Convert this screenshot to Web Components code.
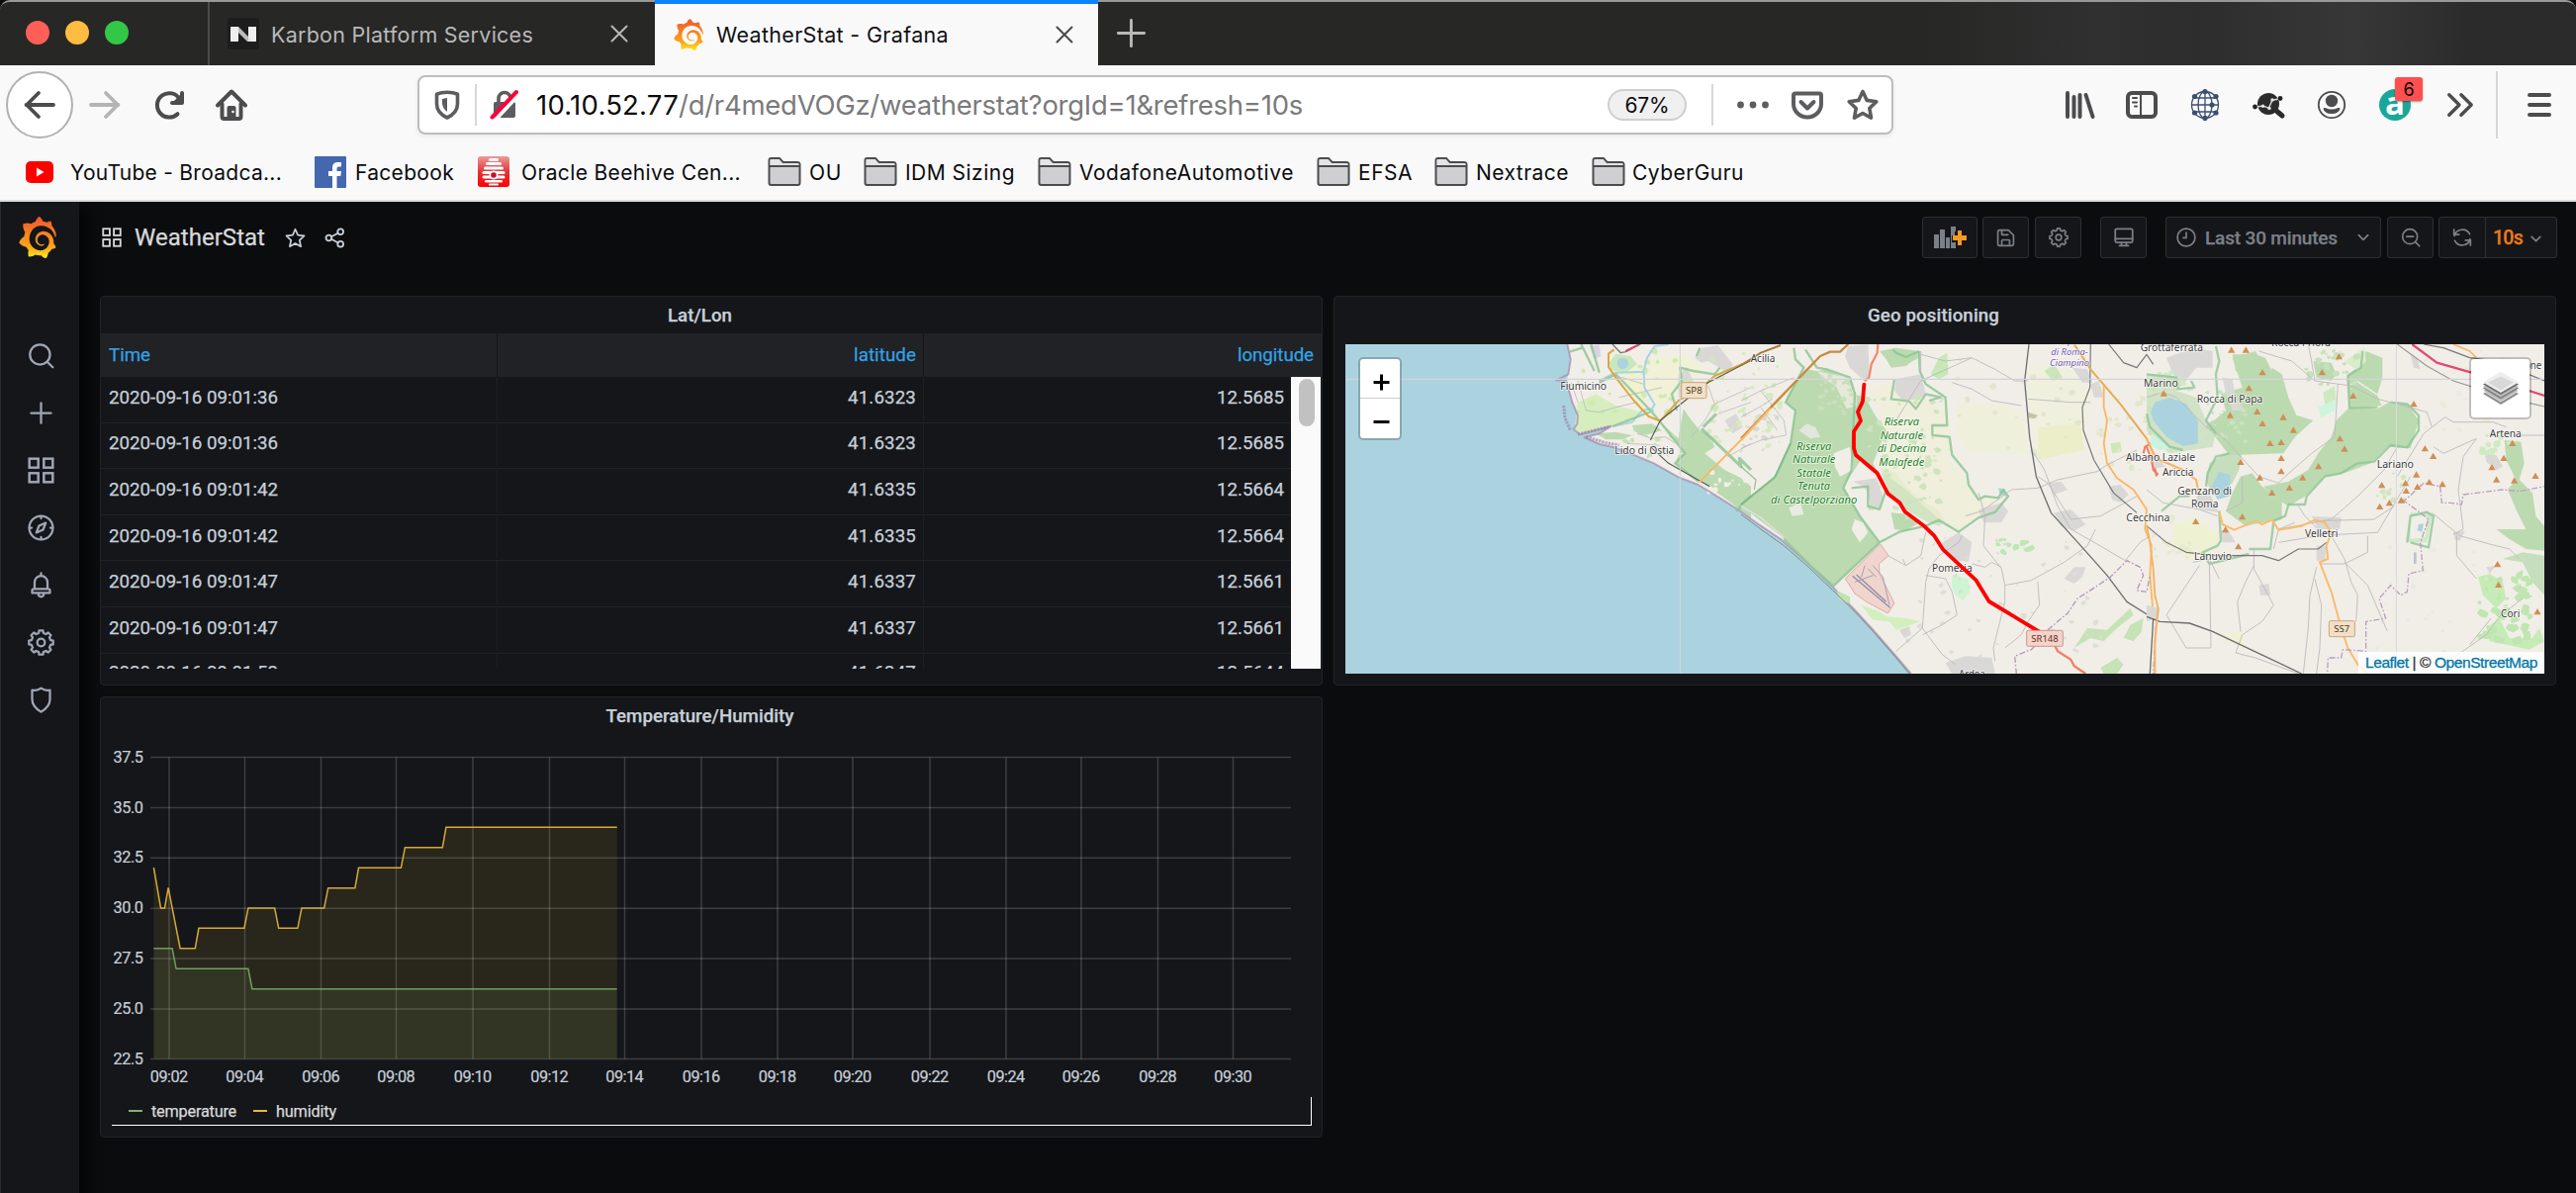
<!DOCTYPE html>
<html lang="en">
<head>
<meta charset="utf-8">
<title>WeatherStat - Grafana</title>
<style>
html,body{margin:0;padding:0;background:#0b0c0e;overflow:hidden}
body{width:2604px;height:1206px;display:flex;flex-direction:column;font-family:Inter,"Liberation Sans",sans-serif}
</style>
</head>
<body>
<browser-tabs></browser-tabs>
<browser-nav></browser-nav>
<bookmark-bar></bookmark-bar>
<grafana-app></grafana-app>

<script>
const define = (name, html, after) => customElements.define(name, class extends HTMLElement {
  connectedCallback() {
    if (this.shadowRoot) return;
    this.attachShadow({ mode: 'open' }).innerHTML = typeof html === 'function' ? html(this) : html;
    if (after) after(this);
  }
});

const GRAFANA = 'M342,161.2c-0.6-6.1-1.6-13.1-3.6-20.9c-2-7.7-5-16.2-9.4-25c-4.4-8.8-10.1-17.9-17.5-26.8c-2.9-3.5-6.1-6.9-9.5-10.2c5.1-20.3-6.2-37.9-6.2-37.9c-19.5-1.2-31.9,6.1-36.5,9.4c-0.8-0.3-1.5-0.7-2.3-1c-3.3-1.3-6.7-2.6-10.3-3.7c-3.5-1.1-7.1-2.1-10.8-3c-3.7-0.9-7.4-1.6-11.2-2.2c-0.7-0.1-1.3-0.2-2-0.3c-8.5-27.2-32.9-38.6-32.9-38.6c-27.3,17.3-32.4,41.5-32.4,41.5s-0.1,0.5-0.3,1.4c-1.5,0.4-3,0.9-4.5,1.3c-2.1,0.6-4.2,1.4-6.2,2.2c-2.1,0.8-4.1,1.6-6.2,2.5c-4.1,1.8-8.2,3.8-12.2,6c-3.9,2.2-7.7,4.6-11.4,7.1c-0.5-0.2-1-0.4-1-0.4c-37.8-14.4-71.3,2.9-71.3,2.9c-3.1,40.2,15.1,65.5,18.7,70.1c-0.9,2.5-1.7,5-2.5,7.5c-2.8,9.1-4.9,18.4-6.2,28.1c-0.2,1.4-0.4,2.8-0.5,4.2C18.8,192.7,8.5,228,8.5,228c29.1,33.5,63.1,35.6,63.1,35.6c0,0,0.1-0.1,0.1-0.1c4.3,7.7,9.3,15,14.9,21.9c2.4,2.9,4.8,5.6,7.4,8.3c-10.6,30.4,1.5,55.6,1.5,55.6c32.4,1.2,53.7-14.2,58.2-17.7c3.2,1.1,6.5,2.1,9.8,2.9c10,2.6,20.2,4.1,30.4,4.5c2.5,0.1,5.1,0.2,7.6,0.1l6.8,-0.1c15.3,21.8,42.1,24.9,42.1,24.9c19.1-20.1,20.2-40.1,20.2-44.4l0-1.8c4-2.8,7.8-5.8,11.4-9.1c7.6-6.9,14.3-14.8,19.9-23.3c0.5-0.8,1-1.6,1.5-2.4c21.6,1.2,36.9-13.4,36.9-13.4c-3.6-22.5-16.4-33.5-19.1-35.6l-1-0.8c0.1-1.4,0.2-2.7,0.3-4.1c0.2-2.4,0.2-4.9,0.2-7.3l-0.2-7.3c-0.4-6-1.2-10-2.3-15c-2.3-9.7-6.1-18.9-11-27.2c-5-8.3-11.2-15.6-18.3-21.8c-7-6.2-14.9-11.2-23.1-14.9c-8.3-3.7-16.9-6.1-25.5-7.2c-4.3-0.6-8.6-0.8-12.9-0.7c-4,0-8.5,0.3-13,1.1c-8.6,1.6-16.7,4.7-23.8,9c-7.1,4.3-13.3,9.6-18.3,15.6c-5,6-8.9,12.7-11.6,19.6c-2.7,6.9-4.2,14.1-4.6,21c-0.1,1.7-0.1,3.5-0.1,5.2l0.3,5.2c0.3,3.5,1,6.9,1.9,10.1c1.9,6.5,4.9,12.4,8.6,17.4c3.7,5,8.2,9.1,12.9,12.4c4.7,3.2,9.8,5.5,14.8,7c5,1.5,10,2.1,14.7,2.1c4,0,9-0.5,13.5-1.8c2-0.7,4-1.5,5.7-2.4c1.8-0.9,3.4-2,6.3-4c1.6-1.3,1.9-3.7,0.6-5.3c-1.1-1.4-3.1-1.8-4.7-0.9c-6,3-10,3.9-15.7,4.3c-3,0-6,-0.3-8-0.7c-3.7-0.5-7.4-1.6-10.9-3.2c-3.6-1.6-7-3.8-10.1-6.6c-3.1-2.8-5.8-6.1-7.9-9.9c-2.1-3.8-3.6-8-4.3-12.4c-0.3-2.2-0.5-4.5-0.4-6.7c0.1-2.5,0.4-5,0.7-7.1c1.7-9.6,6.5-19,13.9-26.1c1.9-1.8,3.9-3.4,6-4.9c2.1-1.5,4.4-2.8,6.8-3.9c2.4-1.1,4.8-2,7.4-2.7c2.5-0.7,5.1-1.1,7.8-1.4c3-0.2,6-0.2,8.2-0.1c2.9,0.2,5.7,0.6,8.5,1.3c5.6,1.2,11.1,3.3,16.2,6.1c10.2,5.7,18.9,14.5,24.2,25.1c2.7,5.3,4.6,11,5.5,16.9c0.5,4,0.8,8,0.7,12.5c-0.1,4-0.5,8-1.4,12.3c-0.8,4-2.5,10-4.1,14c-2.4,6-5.6,11.8-9.4,17.1c-7.7,10.6-18.2,19.2-30.2,24.7c-6,2.7-12.3,4.7-18.8,5.7c-5,0.9-10,1.1-15.6,1c-7-0.3-16-1.5-25-4c-6.7-1.9-13.2-4.6-19.4-7.8c-12.3-6.6-23.4-15.6-32-26.5c-4.3-5.4-8.1-11.3-11.2-17.4c-3.1-6.1-5.6-12.6-7.4-19.1c-1.8-6.6-2.9-13.3-3.4-20.1c-0.3-7,0-13,0.7-19.8c0.4-3.4,1-6.9,1.7-10.3c0.7-3.4,1.5-6.8,2.5-10.2c1.9-6.7,4.3-13.2,7.1-19.3c5.7-12.2,13.1-23.1,22-31.8c2.2-2.2,4.5-4.2,6.9-6.2c2.4-1.9,4.9-3.7,7.5-5.4c2.5-1.7,5.2-3.2,7.9-4.6c6-3,12-5.5,17-6.9c6-1.7,13-3.2,19.9-4.1c6-0.8,15-1.5,23-1.1c5.8,0.2,11.5,0.9,17,1.9c11.1,2.1,21.5,5.6,31,10.3c9.5,4.6,17.9,10.3,25.3,16.5c4,3.3,6.5,5.5,10.2,9.7c3.1,3.3,6,6.6,8.6,10c5.2,6.7,9.4,13.5,12.7,19.9c3,6,5.5,11.5,7.7,17.9c1.5,4.4,2.6,8.3,3.5,11.7c0.3,1.4,1.6,2.3,3,2.1c1.5-0.1,2.6-1.3,2.6-2.8C342.6,170.4,342.5,166.1,342,161.2z';

define('grafana-logo', `<style>:host{display:block;flex:none}svg{display:block;width:100%;height:100%}</style>
<svg viewBox="6 0 339 362" preserveAspectRatio="none"><defs><linearGradient id="g" x1="0" x2="0" y1="1" y2="0"><stop offset="0" stop-color="#fcee1f"/><stop offset=".25" stop-color="#fba919"/><stop offset=".95" stop-color="#f15b2a"/></linearGradient></defs><path fill="url(#g)" d="${GRAFANA}"/></svg>`);

/* Each icon: [viewBox size, markup]; strokes use currentColor. */
const cog = (teeth, ro, ri) => {
  let d = '';
  for (let i = 0; i < teeth; i++) {
    const a = i * 2 * Math.PI / teeth, s = Math.PI / teeth;
    [[a - s * .62, ri], [a - s * .4, ro], [a + s * .4, ro], [a + s * .62, ri]].forEach(([t, r]) =>
      d += (d ? 'L' : 'M') + (12 + r * Math.sin(t)).toFixed(2) + ' ' + (12 - r * Math.cos(t)).toFixed(2));
  }
  return d + 'Z';
};
const st = (w, m) => `<g fill="none" stroke="currentColor" stroke-width="${w}" stroke-linecap="round" stroke-linejoin="round">${m}</g>`;
const ICONS = {
  search: [24, st(2, '<circle cx="11" cy="11" r="9"/><path d="m17.5 17.5 5 5"/>')],
  plus: [24, st(2, '<path d="M12 3v18M3 12h18"/>')],
  grid: [24, st(2.2, '<rect x="1.5" y="1.5" width="8" height="8"/><rect x="14.5" y="1.5" width="8" height="8"/><rect x="1.5" y="14.5" width="8" height="8"/><rect x="14.5" y="14.5" width="8" height="8"/>').replace('stroke-linejoin="round"', '')],
  compass: [24, st(2, '<circle cx="12" cy="12" r="10.6"/><path d="M16.2 7.6 13.8 13.8 7.8 16.4 10.2 10.2ZM12 1.6v2M12 20.4v2M1.6 12h2M20.4 12h2"/>')],
  bell: [24, st(2, '<path d="M12 1.2v2M6.2 15.5V9.5a5.8 5.8 0 0 1 11.6 0v6M5.5 15.5h13q1.5 0 1.5 1.5v2H4v-2q0-1.5 1.5-1.5zM9.3 19.5q.5 3 2.7 3t2.7-3"/>')],
  gear: [24, st(2, `<path d="${cog(8, 11, 8.8)}"/><circle cx="12" cy="12" r="3.4"/>`)],
  shield: [24, st(2, '<path d="M12 1.5Q8.5 4.2 4 3.2V11.5Q4 18 12 22.8 20 18 20 11.5V3.2Q15.5 4.2 12 1.5z"/>')],
  star: [24, st(2, '<path d="m12 2 3 6.8 7.3.8-5.4 5 1.5 7.3L12 18.2 5.6 21.9l1.5-7.3-5.4-5L9 8.8z"/>')],
  share: [24, st(2.1, '<circle cx="5" cy="12" r="3.3"/><circle cx="18.5" cy="4.8" r="3.3"/><circle cx="18.5" cy="19.2" r="3.3"/><path d="m8 10.5 7.5-4M8 13.5l7.5 4"/>')],
  save: [24, st(2.1, '<path d="M4 2h11.5L22 8.5V20q0 2-2 2H4q-2 0-2-2V4q0-2 2-2zM7 2.5V8h8M7 21.5V15.5q0-1 1-1h8q1 0 1 1v6"/>')],
  monitor: [24, st(2.1, '<rect x="1.5" y="1.5" width="21" height="16.5" rx="2"/><path d="M1.5 13.5h21M9 18v3.5M15 18v3.5M6.5 22h11"/>')],
  clock: [24, st(2, '<circle cx="12" cy="12" r="10.7"/><path d="M12 6v6.5H8.5"/>')],
  down: [24, st(3, '<path d="m4 8 8 8 8-8"/>')],
  zoomout: [24, st(2, '<circle cx="11" cy="11" r="9"/><path d="m17.5 17.5 5 5M7 11h8"/>')],
  sync: [24, st(2.1, '<path d="M2.5 10a10 10 0 0 1 18.5-2M2 2.5V8.5h6M21.5 14a10 10 0 0 1-18.5 2M22 21.5V15.5h-6"/>')],
  addpanel: [32, '<g transform="translate(0 3)"><path fill="currentColor" d="M0 10h5v14H0zM6 5h5v19H6zM12 13h4v11h-4zM17 2h5v5h-1v4h-3v7h4v6h-5z"/><path d="M24 6h4v5h5v5h-5v5h-4v-5h-5v-5h5z" fill="#f59a23"/></g>'],
  close: [24, st(2.4, '<path d="m3 3 18 18M21 3 3 21"/>')],
  back: [32, st(3.8, '<path d="M30 16H2.5M15 4 3 16l12 12"/>')],
  fwd: [32, st(3.8, '<path d="M2 16h27.5M17 4l12 12-12 12"/>')],
  reload: [32, st(4, '<path d="M24.5 25.2A12.2 12.2 0 1 1 26.5 10"/><path d="M29 4v10H19"/>') + '<path d="M19 14 29 4v10z" fill="currentColor"/>'],
  home: [32, st(4, '<path d="M2 16.5 16 2.5l14 14"/><path d="M6.5 15V28q0 2 2 2h15q2 0 2-2V15"/>') + '<path d="M11.5 30V19q0-2 2-2h5q2 0 2 2v11z" fill="currentColor"/><circle cx="17.5" cy="23" r="1.3" fill="#f9f9fa"/>'],
  track: [32, st(3.6, '<path d="M16 3.2q6 0 10.5 2V15q0 9-10.5 14Q5.5 24 5.5 15V5.2Q10 3.2 16 3.2z"/>') + '<path d="M16 9v14q-5-4-5-9V10z" fill="currentColor"/>'],
  lock: [32, '<path d="M5 15q0-2 2-2h18q2 0 2 2v12q0 2-2 2H7q-2 0-2-2z" fill="currentColor"/>' + st(3.6, '<path d="M10 14V9.5a6 6 0 0 1 12 0V14"/>') + '<path d="m6 32 24-26" stroke="#fff" stroke-width="4"/><path d="M3.5 28.5 28 3" stroke="#ff0039" stroke-width="4" stroke-linecap="round"/>'],
  dots: [32, '<g fill="currentColor"><circle cx="3.5" cy="16" r="3.4"/><circle cx="16" cy="16" r="3.4"/><circle cx="28.5" cy="16" r="3.4"/></g>'],
  pocket: [32, st(4, '<path d="M4 4.5h24q2 0 2 2V15a14 13.5 0 0 1-28 0V6.5q0-2 2-2z"/><path d="m9.5 13 6.5 6.5 6.5-6.5"/>')],
  bstar: [32, st(3.6, '<path d="m16 2.5 4.2 8.9 9.6 1.3-7 6.8 1.7 9.6L16 24.5l-8.5 4.6 1.7-9.6-7-6.8 9.6-1.3z"/>')],
  library: [32, st(4, '<path d="M4 4v24M10.5 8v20M16.5 6v22M22.5 6l7 22"/>')],
  sidebar: [32, st(4, '<rect x="2" y="4" width="28" height="24" rx="4"/>') + st(2, '<path d="M15 4v24M7 9h4M7 13.5h4M9 17.5h2"/>')],
  globe: [32, `<g fill="none" stroke="#3b4f70" stroke-width="1.3"><circle cx="16" cy="16" r="13.5"/><ellipse cx="16" cy="16" rx="7" ry="13.5"/><path d="M16 2v28M2.5 16h27M5 9h22M5 23h22"/></g><g fill="#3b4f70"><circle cx="16" cy="2.6" r="2.6"/><circle cx="16" cy="29.4" r="2.6"/><circle cx="5.5" cy="7.5" r="2.6"/><circle cx="27" cy="7.5" r="2.6"/><circle cx="5.5" cy="24" r="2.6"/><circle cx="27" cy="24" r="2.6"/><circle cx="23" cy="16" r="2.6"/></g>`],
  magnet: [32, `<circle cx="16" cy="15" r="11" fill="#2c2c2c"/><path d="m23 21 7 6" stroke="#2c2c2c" stroke-width="5" stroke-linecap="round"/><path d="m2 18 8.5-.8 6 2 3.5-8 8-1.5" stroke="#d8d8d8" stroke-width="1.4" fill="none"/><circle cx="2.5" cy="18" r="2.4" fill="#222"/><circle cx="28" cy="9.5" r="2.4" fill="#222"/><g fill="#e4e4e4"><circle cx="10.5" cy="17.2" r="1.7"/><circle cx="17" cy="19.5" r="1.7"/><circle cx="20" cy="11" r="1.7"/></g>`],
  account: [32, st(1.8, '<circle cx="16" cy="16" r="13.2"/>') + '<g fill="currentColor"><circle cx="16" cy="12" r="6.2"/><path d="M7.5 20q0-1.5 2-1 6.5 3 13 0 2-.5 2 1-1.5 5-8.5 5t-8.5-5z"/></g>'],
  more: [32, st(3.6, '<path d="m5 5 11 11L5 27M18 5l11 11-11 11"/>')],
  menu: [32, st(4, '<path d="M6 6h20M6 16h20M6 26h20"/>')],
  nutanix: [32, '<rect width="32" height="32" rx="3" fill="#1d1d1d"/><path d="M3 9h8v15H3zM21 9h8v15h-8z" fill="#eee"/><path d="M11 9 24 22v2h-4L11 15z" fill="#bdbdbd"/><path d="M21 9h8v15h-8z" fill="#eee" opacity=".8"/>'],
  youtube: [32, '<rect x="2" y="5" width="28" height="22" rx="5" fill="#f00"/><path d="m13 11.5 7.5 4.5-7.5 4.5z" fill="#fff"/>'],
  facebook: [32, '<rect width="32" height="32" rx="1" fill="#4467b0"/><path d="M18 32V20h-4v-5h4v-3.5Q18 6 23.5 6H27v4.5h-2.5q-2 0-2 2V15H27l-.7 5h-3.8v12z" fill="#fff"/>'],
  oracle: [32, '<defs><linearGradient id="o" x2="0" y2="1"><stop offset="0" stop-color="#ee9a97"/><stop offset=".5" stop-color="#e2353a"/><stop offset="1" stop-color="#f00"/></linearGradient></defs><rect width="32" height="31" rx="3" fill="url(#o)"/><g fill="#fff"><rect x="11" y="2" width="10" height="3" rx="1.5"/><rect x="8" y="6" width="16" height="3" rx="1.5"/><rect x="6" y="10.5" width="20" height="3" rx="1.5"/><rect x="4.5" y="15" width="23" height="3" rx="1.5"/><rect x="4.5" y="19.5" width="23" height="3" rx="1.5"/><rect x="7" y="24" width="18" height="2.6" rx="1.3"/><rect x="11" y="27.5" width="10" height="2" rx="1"/></g><circle cx="16" cy="19" r="4.5" fill="#fff"/><circle cx="16" cy="19" r="2.8" fill="#c8102e"/>'],
  folder: [34, '<path d="M1.5 8V5q0-2 2-2H12l3.5 4H30q2.5 0 2.5 2.5V28q0 2-2 2h-27q-2 0-2-2z" fill="#cfcfd1" stroke="#4c4c4e" stroke-width="2"/><path d="M2.5 10.5h29V9q0-1-1-1H15l-3.500-4h-8q-1 0-1 1z" fill="#e4e4e6"/><path d="M2 11h30" stroke="#4c4c4e" stroke-width="2"/>'],
};
define('ui-icon', el => {
  const [v, m] = ICONS[el.getAttribute('name')], s = el.getAttribute('size') || v;
  return `<style>:host{display:block;flex:none;width:${s}px;height:${s}px}svg{display:block;overflow:visible}</style><svg width="${s}" height="${s}" viewBox="0 0 ${v} ${v}">${m}</svg>`;
});

/* ---------- browser chrome ---------- */
define('browser-tabs', `<style>
:host{display:flex;height:66px;flex:none;box-sizing:border-box;align-items:center;border-top:2px solid #999;color:#b9b9b9;font-size:21.5px;border-top-left-radius:10px;border-top-right-radius:10px;
background:linear-gradient(90deg,#272726 0,#272726 1950px,#303030 2120px,#2d2d2d 2220px,#373737 2380px,#2b2b2b 2500px)}
.lights{width:184px;padding-left:26px;height:100%;display:flex;gap:16px;align-items:center;border-right:2px solid #4b4b4a;box-sizing:content-box}
.lights i{width:24px;height:24px;border-radius:50%;flex:none;margin-top:-2px}
.tab{display:flex;align-items:center;height:100%;box-sizing:border-box;flex:none}
.tab.a{background:#f9f9fa;color:#101012;border-top:4px solid #0a84ff;height:66px;margin-top:-2px;width:448px;padding-left:19px}
.tab.b{width:450px;padding-left:18px}
fit-text{margin:2px 0 0 12px}
.a fit-text{margin-top:-1px}
</style>
<div class="lights"><i style="background:#ff5f57"></i><i style="background:#febc40"></i><i style="background:#33c748"></i></div>
<div class="tab b"><ui-icon name="nutanix"></ui-icon><fit-text w="265">Karbon Platform Services</fit-text><ui-icon name="close" size="20" style="margin-left:77px"></ui-icon></div>
<div class="tab a"><grafana-logo style="width:30px;height:32px"></grafana-logo><fit-text w="235" style="margin-left:13px">WeatherStat - Grafana</fit-text><ui-icon name="close" size="20" style="margin-left:107px;color:#4a4a4c"></ui-icon></div>
<ui-icon name="plus" size="35" style="margin:-2px 0 0 16px"></ui-icon>`);

define('browser-nav', `<style>
:host{display:flex;height:80px;flex:none;align-items:center;background:#f9f9fa;color:#4c4c4e;padding-left:6px}
.back{width:64px;height:64px;border:2px solid #b1b1b1;border-radius:50%;background:#fff;display:flex;align-items:center;justify-content:center;flex:none}
.url{margin-left:172px;box-sizing:border-box;width:1492px;height:60px;border:2px solid #bdbdbd;border-radius:8px;background:#fff;display:flex;align-items:center;box-shadow:0 2px 5px #0001;color:#5d5d5f;font-size:27.5px;flex:none}
.sep{width:2px;height:42px;background:#d7d7db;flex:none}
.pill{width:76px;height:28px;border:2px solid #cfcfd1;border-radius:16px;background:#f0f0f1;color:#0c0c0d;font-size:21px;display:flex;align-items:center;justify-content:center;margin-left:308px}
.badge{position:absolute;left:16px;top:-12px;width:28px;height:24px;border-radius:3px;background:#ff4f4f;color:#000;font-size:18px;line-height:25px;text-align:center;box-shadow:0 1px 2px #0006}
.a{position:relative;width:32px;height:32px;border-radius:50%;background:#1aa79a;text-align:center;flex:none}
.a b{color:#fff;font:bold 33px/27px "Open Sans",sans-serif}
</style>
<div class="back"><ui-icon name="back"></ui-icon></div>
<ui-icon name="fwd" style="margin-left:16px;color:#b4b4b6"></ui-icon>
<ui-icon name="reload" style="margin-left:33px"></ui-icon>
<ui-icon name="home" style="margin-left:31px"></ui-icon>
<div class="url"><ui-icon name="track" style="margin-left:12px"></ui-icon><div class="sep" style="margin:0 12px 0 12px"></div><ui-icon name="lock"></ui-icon>
<fit-text w="144" style="margin-left:16px;color:#0c0c0d">10.10.52.77</fit-text><fit-text w="631" style="color:#7a7a7c">/d/r4medVOGz/weatherstat?orgId=1&amp;refresh=10s</fit-text>
<div class="pill"><fit-text w="45">67%</fit-text></div><div class="sep" style="margin-left:25px"></div>
<ui-icon name="dots" style="margin-left:24px"></ui-icon><ui-icon name="pocket" style="margin-left:23px"></ui-icon><ui-icon name="bstar" style="margin-left:24px"></ui-icon></div>
<ui-icon name="library" style="margin-left:172px"></ui-icon>
<ui-icon name="sidebar" style="margin-left:31px"></ui-icon>
<ui-icon name="globe" style="margin-left:32px"></ui-icon>
<ui-icon name="magnet" style="margin-left:32px"></ui-icon>
<ui-icon name="account" style="margin-left:32px"></ui-icon>
<div class="a" style="margin-left:32px"><b>a</b><div class="badge">6</div></div>
<ui-icon name="more" size="30" style="margin-left:34px"></ui-icon>
<div class="sep" style="margin-left:22px;height:68px"></div>
<ui-icon name="menu" style="margin-left:26px"></ui-icon>`);

define('book-mark', el => `<style>:host{display:flex;align-items:center;flex:none;gap:${el.getAttribute('gap') || 8}px;margin-left:${el.getAttribute('ml') || 24}px}</style>
<ui-icon name="${el.getAttribute('icon') || 'folder'}"></ui-icon><fit-text w="${el.getAttribute('w')}">${el.textContent}</fit-text>`);
define('bookmark-bar', `<style>:host{display:flex;height:58px;flex:none;align-items:center;box-sizing:border-box;background:#f9f9fa;border-bottom:2px solid #dcdcdd;color:#0c0c0d;font-size:21px}</style>
<book-mark icon="youtube" w="214" gap="15" ml="24">YouTube - Broadca...</book-mark>
<book-mark icon="facebook" w="100" gap="9" ml="33">Facebook</book-mark>
<book-mark icon="oracle" w="222" gap="12" ml="24">Oracle Beehive Cen...</book-mark>
<book-mark w="33" ml="27">OU</book-mark>
<book-mark w="111" ml="22">IDM Sizing</book-mark>
<book-mark w="217" ml="23">VodafoneAutomotive</book-mark>
<book-mark w="55" ml="23">EFSA</book-mark>
<book-mark w="94" ml="22">Nextrace</book-mark>
<book-mark w="113" ml="23" gap="7">CyberGuru</book-mark>`);

/* ---------- dashboard ---------- */
define('side-menu', `<style>:host{display:flex;flex-direction:column;align-items:center;width:79px;border-left:1px solid #2a2b2f;background:#15161a;color:#9fa7b3;padding-top:15px;flex:none;z-index:1;box-shadow:8px 8px 12px #000a}
nav{display:flex;flex-direction:column;gap:31px;margin-top:85px;padding-left:1px}</style>
<grafana-logo style="width:38px;height:42px;margin-right:6px"></grafana-logo>
<nav>${['search', 'plus', 'grid', 'compass', 'bell', 'gear', 'shield'].map(n => `<ui-icon name="${n}" size="27"></ui-icon>`).join('')}</nav>`);

define('tool-button', el => `<style>:host{display:flex;box-sizing:border-box;height:42px;align-items:center;justify-content:center;border:1px solid #2c2f33;border-radius:3px;background:#15161a;color:#7b8087;flex:none}</style><slot></slot>`);

define('dash-toolbar', `<style>:host{display:flex;height:42px;padding:15px 19px 38px 23px;align-items:center;color:#d8d9da;font-size:24px}
.t{flex:1;display:flex;align-items:center}</style>
<div class="t"><ui-icon name="grid" size="20"></ui-icon><fit-text w="132" style="margin-left:13px">WeatherStat</fit-text>
<ui-icon name="star" size="21" style="margin-left:20px;color:#c7d0d9"></ui-icon><ui-icon name="share" size="21" style="margin-left:19px;color:#c7d0d9"></ui-icon></div>
<tool-button style="width:56px"><ui-icon name="addpanel" size="32"></ui-icon></tool-button>
<tool-button style="width:47px;margin-left:5px"><ui-icon name="save" size="19"></ui-icon></tool-button>
<tool-button style="width:47px;margin-left:6px"><ui-icon name="gear" size="20"></ui-icon></tool-button>
<tool-button style="width:47px;margin-left:19px"><ui-icon name="monitor" size="20"></ui-icon></tool-button>
<tool-button style="width:218px;margin-left:19px;font-size:19px;font-weight:500"><ui-icon name="clock" size="20"></ui-icon><fit-text w="134" style="margin:0 19px 0 9px">Last 30 minutes</fit-text><ui-icon name="down" size="14"></ui-icon></tool-button>
<tool-button style="width:47px;margin-left:6px"><ui-icon name="zoomout" size="20"></ui-icon></tool-button>
<tool-button style="width:48px;margin-left:5px;border-radius:3px 0 0 3px"><ui-icon name="sync" size="20"></ui-icon></tool-button>
<tool-button style="width:73px;margin-left:-1px;border-radius:0 3px 3px 0;font-size:19.5px;font-weight:500;color:#eb7b18"><fit-text w="30" style="margin-right:7px">10s</fit-text><ui-icon name="down" size="13" style="color:#7b8087;margin:3px 7px 0 0"></ui-icon></tool-button>`);

define('dash-panel', el => `<style>:host{display:flex;flex-direction:column;box-sizing:border-box;border:1px solid #212327;border-radius:4px;background:#15161a;min-width:0;min-height:0}
h2{margin:0;height:37px;padding-right:23px;display:flex;align-items:center;justify-content:center;font-size:18.7px;font-weight:500;color:#c7d0d9;flex:none}</style>
<h2><fit-text w="${el.getAttribute('tw')}">${el.getAttribute('heading')}</fit-text></h2><slot></slot>`);

const ROWS = [['36', '41.6323', '12.5685'], ['36', '41.6323', '12.5685'], ['42', '41.6335', '12.5664'], ['42', '41.6335', '12.5664'], ['47', '41.6337', '12.5661'], ['47', '41.6337', '12.5661'], ['53', '41.6347', '12.5644']];
define('data-table', `<style>:host{display:flex;flex-direction:column;font-size:18.7px;color:#c7d0d9}
.h,.r{display:flex}.h{background:#202226;color:#33a2e5;height:44px}
.h>*,.r>*{display:flex;align-items:center;box-sizing:border-box;padding:0 7px 0 8px;border-right:1px solid #1d1f23}
.h>*{border-color:#15161a}
.h>*:nth-child(1),.r>*:nth-child(1){width:401px}.h>*:nth-child(2),.r>*:nth-child(2){width:431px;justify-content:flex-end}
.h>*:nth-child(3),.r>*:nth-child(3){flex:1;justify-content:flex-end;border:0}.h>*:nth-child(3){padding-right:8px}
.body{display:flex;height:295px;overflow:hidden}.rows{flex:1}.r{height:45.6px;border-bottom:1px solid #202226}.r>*{margin-bottom:2px;padding-bottom:2px}
.r:last-child>*{padding-bottom:4px}
.bar{width:30px;background:#fafafa;margin-right:1px;display:flex;justify-content:center;padding-top:2px;box-sizing:border-box}.bar i{width:16px;height:48px;border-radius:8px;background:#c1c1c1;margin-left:1px}</style>
<div class="h"><div><fit-text w="42">Time</fit-text></div><div><fit-text w="63">latitude</fit-text></div><div><fit-text w="77">longitude</fit-text></div></div>
<div class="body"><div class="rows">${ROWS.map(([s, a, b]) => `<div class="r"><div><fit-text w="171">2020-09-16 09:01:${s}</fit-text></div><div><fit-text w="69">${a}</fit-text></div><div><fit-text w="68">${b}</fit-text></div></div>`).join('')}</div><div class="bar"><i></i></div></div>`);

/* ---------- chart: origin of the drawing is the panel body (102,742) ---------- */
const X0 = 102, Y0 = 742;
const px = x => (x * 0.44643 - X0).toFixed(1), py = y => (680 + y / 3 - Y0).toFixed(1);
const HUM = [[348,591],[364,714],[373,714],[381,652],[408,836],[442,836],[450,775],[553,775],[562,714],[622,714],[631,775],[674,775],[683,714],[734,714],[743,653],[804,653],[812,592],[908,592],[917,530],[1002,530],[1010,469],[1397,469]];
const TMP = [[348,836],[390,836],[399,898],[562,898],[571,959],[1397,959]];
const line = a => a.map(([x, y]) => px(x) + ',' + py(y)).join(' ');
const area = a => line([...a, [1397, 1171], [348, 1171]]);
const VX = [171, 247.5, 324.5, 400.5, 478, 555.5, 631.5, 709, 786, 862, 940, 1017, 1093, 1170.5, 1246.5];
const HY = [765.5, 816.5, 867.3, 918.2, 969, 1020, 1070.5];
define('time-chart', () => `<style>:host{display:flex;flex-direction:column;color:#c7d0d9;flex:1}svg{display:block;flex:none;font:16.3px Roboto,sans-serif}
.lg{display:flex;align-items:center;height:28px;width:1212px;margin-left:11px;border-right:1px solid #fff;border-bottom:1px solid #fff;font-size:16.3px;color:#d8d9da;padding-left:0}
.lg i{width:14px;height:2px;flex:none}</style>
<svg width="1234" height="367" viewBox="0 0 1234 367">
<g stroke="#ffffff" stroke-opacity=".17" stroke-width="1.5">${HY.map(y => `<path d="M${152 - X0} ${y - Y0}H${1305 - X0}"/>`).join('')}${VX.map(x => `<path d="M${x - X0} ${765.5 - Y0}V${1070.5 - Y0}"/>`).join('')}</g>
<polygon points="${area(TMP)}" fill="#7eb26d" fill-opacity=".1"/><polygon points="${area(HUM)}" fill="#e2c234" fill-opacity=".1"/>
<polyline points="${line(TMP)}" fill="none" stroke="#7eb26d" stroke-opacity=".85" stroke-width="1.5"/><polyline points="${line(HUM)}" fill="none" stroke="#eab839" stroke-opacity=".9" stroke-width="1.5"/>
<g fill="#c7d0d9" stroke="#c7d0d9" stroke-width=".2">${HY.map((y, i) => `<text x="${145 - X0}" y="${y - Y0 + 5}" text-anchor="end" textLength="30.5">${(37.5 - 2.5 * i).toFixed(1)}</text>`).join('')}
${VX.map((x, i) => `<text x="${x - X0}" y="${1094 - Y0}" text-anchor="middle" textLength="38.5">09:${String(2 + 2 * i).padStart(2, '0')}</text>`).join('')}</g></svg>
<div class="lg"><i style="background:#7eb26d;margin-left:17px"></i><fit-text w="86" style="margin:0 17px 0 9px">temperature</fit-text><i style="background:#eab839"></i><fit-text w="61" style="margin-left:9px">humidity</fit-text></div>`);

/* ---------- map: drawn at three units per pixel ---------- */
let seed = 7;
const rnd = () => (seed = (seed * 16807) % 2147483647) / 2147483647;
const blobs = (n, x, y, w, h, s, c) => Array.from({ length: n }, () => {
  const cx = x + rnd() * w, cy = y + rnd() * h, r = s * (.4 + rnd()), k = 6;
  return `<polygon fill="${c}" points="${Array.from({ length: k }, (_, i) => { const a = i / k * 6.283, q = r * (.5 + rnd() * .7); return (cx + q * Math.cos(a) * 1.2).toFixed(0) + ',' + (cy + q * Math.sin(a)).toFixed(0); }).join(' ')}"/>`;
}).join('');
const P = (pts, fill, extra = '') => `<polygon points="${pts}" fill="${fill}" ${extra}/>`;
const L = (d, c, w, extra = '') => `<path d="M${d}" fill="none" stroke="${c}" stroke-width="${w}" stroke-linejoin="round" ${extra}/>`;
const G = '#bcdab0', U = '#d9d8d6', R = '#bdbbbd', W = '#aad3df', B = '#8fc596', O = '#fbb762', K = '#777';
const T = (x, y, t, w, c = '#3b3b3b', s = 30, e = '') => `<text x="${x}" y="${y}" font-size="${s}" fill="${c}" text-anchor="middle" ${w ? `textLength="${w}" lengthAdjust="spacingAndGlyphs"` : ''} ${e}>${t}</text>`;
const peak = s => s.split(' ').map(p => { const [x, y] = p.split(',').map(Number); return `<path d="M${x} ${y - 10}l11 19h-22z" fill="#d08f55"/>`; }).join('');
const IT = 'font-style="italic"';
const COAST = '703,39 713,85 706,130 700,152 718,215 735,255 733,280 722,297 742,313 790,300 835,288 800,310 760,322 800,340 845,350 910,377 965,400 1040,442 1100,465 1165,505 1220,540 1290,590 1350,630 1435,705 1508,775 1575,845 1630,905 1700,985 1745,1038';

define('geo-map', () => `<style>:host{display:block;position:relative;margin:11px;width:1212px;height:333px;overflow:hidden;-webkit-text-stroke:0}svg{display:block}
.zoom,.layers{position:absolute;background:#fff;border:2px solid #0003;background-clip:padding-box;border-radius:5px;box-sizing:border-box}
.zoom{left:13px;top:13px;width:44px;height:84px}.zoom div{height:39px;position:relative}.zoom div+div{border-top:1px solid #ccc}
.zoom svg{margin:auto;padding-top:14px;padding-left:2px}
.layers{right:13px;top:13px;width:63px;height:63px;border-width:2px}.layers svg{margin:12px 0 0 12px}
.attr{position:absolute;right:0;bottom:0;height:22px;width:188px;background:#fffc;display:flex;align-items:center;justify-content:center;color:#333;font-family:"Liberation Sans",sans-serif;font-size:15.5px;-webkit-text-stroke:.3px}
.attr a{color:#0078a8}</style>
<svg width="1212" height="333" viewBox="0 0 3636 999" font-family="'Noto Sans',sans-serif">
<rect width="3636" height="999" fill="${W}"/>
<g transform="translate(-30 -39)">
${P(COAST + ' 3700,1038 3700,39', '#f1eee8')}
${P('735,215 790,190 850,225 930,245 900,275 850,285 790,298 742,310 725,295', '#d6eebd')}
${P('865,120 905,95 935,160 935,235 890,180', '#eef2cf')}${P('960,80 1060,70 1120,110 1030,200 975,230 940,150', '#f0f1d6')}
${P('830,95 850,68 895,75 915,100 880,125 835,118', '#c9e6bd')}<circle cx="871" cy="97" r="17" fill="${W}"/>
${P('900,285 960,280 990,300 960,310 930,315 905,302', G)}${P('790,310 850,305 900,315 870,328 820,328', G)}
${P('985,275 1040,325 1055,235 1080,270 1105,300 1130,310 1150,350 1120,370 1180,420 1230,445 1260,470 1260,570 1200,520 1130,470 1030,400 1040,375 1060,370', G)}
${P('1090,80 1110,50 1160,42 1205,100 1190,130 1165,110 1130,90 1110,95', U)}${P('1040,130 1065,108 1085,150 1080,200 1040,200', U)}
${P('1180,270 1215,250 1235,290 1205,310', U)}${P('770,45 800,40 805,75 785,85', '#d8d3e4')}
${blobs(28, 740, 60, 460, 200, 9, '#cdebb0')}${blobs(20, 860, 310, 200, 80, 6, '#c4e4b4')}${blobs(16, 1110, 150, 140, 200, 7, '#d9e8c0')}${blobs(20, 1130, 330, 120, 160, 8, '#f1eee8')}
${L('703,39 713,85 706,130 670,148 700,150 718,215 735,255 733,280 722,297 742,313 790,300 835,288 800,310 755,322 800,342 845,352 910,377 965,400 1040,442 1100,465 1165,505 1220,540 1290,590 1350,630 1435,705 1508,775 1575,845 1630,905 1700,985 1745,1038', '#a68db4', 6, 'opacity=".75"')}
${L('692,225 696,262 712,300M760,320 820,338 860,345M735,312 835,288', '#9b86ab', 9, 'opacity=".7" stroke-dasharray="7 3"')}
${L('1010,39 968,45 945,80 935,120 937,170 968,222 960,235 930,240 900,275 840,288M935,122 850,125 800,150', W, 6)}
${L('745,39 785,120M775,39 800,125M710,62 748,50M800,155 850,130 870,150 960,245 985,275 1060,370 1030,400 1100,455M840,288 965,240M1095,75 1105,50M1165,110 1150,130 1085,120 1045,110 1050,150 1020,190 1035,240', B, 7, 'opacity=".85"')}
${L('1115,290 1155,250M1110,295 1230,410 1225,385 1260,420M1215,545 1260,500', B, 9, 'opacity=".85"')}
${L('735,150 760,240 800,245 850,230 915,215M715,155 735,215M800,150 870,140 935,160M860,200 990,170M915,310 960,325 1000,320 1050,350M885,340 980,345 1010,380M1080,320 1120,270 1150,220 1260,170M1160,250 1260,215M1130,165 1150,220M1190,380 1260,340', R, 2.5)}
${L('845,55 828,68 828,108 850,140 905,210 950,258 985,272 1040,210 1110,170 1150,135 1220,105 1260,88', '#dba73d', 6)}
${L('1260,88 1130,155 1060,210 985,270 955,330M955,350 1010,400 1135,470', '#555b55', 3.5)}
${L('1103,458 1195,365 1260,298', O, 6)}${L('840,39 865,65 880,62 925,39', K, 4)}${L('880,60 920,40', '#e0466e', 6)}
</g>
<g transform="translate(1200 -39)">
${P('140,195 195,115 230,120 260,115 330,150 345,190 372,200 370,380 330,440 310,475 360,560 420,640 280,770 200,700 120,620 0,530 100,445 150,340 165,240 135,215', G)}
${P('230,120 320,140 350,190 350,225 320,235 290,170 250,140', '#e6e8d8')}
${P('280,370 330,350 340,420 300,440 285,410', '#f1eee8')}${P('200,280 225,290 240,320 210,325 175,300', '#e3e6dc')}${P('345,570 370,580 385,610 360,640 335,600', '#f1eee8')}${P('145,535 180,520 190,555 155,560', '#e8ebe0')}
${P('370,190 410,260 440,300 400,400 415,430 375,395 345,370 342,300', G)}
${P('420,410 470,430 500,470 560,520 600,545 620,575 600,590 560,575 500,540 450,490', '#d2e4c2')}${P('455,550 510,555 540,580 500,605 465,600', G)}
${P('420,60 470,50 540,60 540,80 520,90 500,105 455,110 440,85', G)}${P('600,80 625,65 628,130 600,145 575,130', '#c5e8b5')}
${P('395,180 430,160 480,165 620,240 640,330 630,390 690,450 720,500 790,510 720,565 660,605 600,570 500,480 420,420 440,300', '#eef0d6', 'opacity=".7"')}
${P('655,215 780,220 850,240 870,330 870,375 760,370 690,370 650,300', '#eff0dc')}${P('870,100 1000,110 1060,200 1040,330 900,390 880,250 865,190', '#eff1da', 'opacity=".7"')}${P('900,290 1030,280 1040,360 900,390', '#eceec9')}
${P('325,45 385,40 390,140 375,150 330,110 315,75', U)}${P('470,145 545,130 560,190 540,205 490,210 465,180', U)}${P('340,455 410,445 430,500 420,535 395,540 385,490 370,470', U)}
${P('720,540 790,520 810,545 790,580 735,580', U)}${P('610,640 660,610 700,640 690,700 660,695 615,670', U)}${P('1115,470 1150,465 1175,495 1150,520 1125,510', U)}${P('950,550 1000,540 1045,585 1010,605 970,590', U)}${P('1005,110 1050,115 1065,155 1035,155', U)}${P('1060,160 1085,150 1100,200 1070,200', U)}
${P('620,1005 680,985 760,990 770,1038 640,1038', U)}${P('480,905 510,895 515,920 495,930', U)}${P('1010,715 1045,715 1035,745 1010,765 980,750', U)}${P('935,460 970,455 990,480 950,495', U)}
${P('640,740 690,750 693,790 675,818 650,800 638,770', '#cef5d2')}
${P('316,750 422,645 447,680 418,705 420,735 465,825 445,855 380,820 345,795', '#efd5cd', 'stroke="#e3a9a0" stroke-width="3"')}
${L('338,742 452,838M350,738 440,820', '#8f8ea6', 4)}${L('375,710 365,745M385,720 410,745M400,710 430,745 450,830M345,760 400,740', '#a3a0b4', 3)}
${P('365,830 420,850 440,865 500,870 545,880 470,905 450,880 400,875', '#d3efbc')}${P('290,785 330,805 330,825 300,815', '#bfe2b2')}
${P('1010,960 1050,900 1110,905 1180,840 1190,860 1140,900 1100,940 1060,930', '#c6e3b8')}${P('1180,890 1220,870 1215,910 1190,940 1160,930', '#c6e3b8')}${P('1090,1020 1140,990 1160,1010 1140,1038 1100,1038', '#c6e3b8')}
${P('920,120 950,100 975,140 945,150', '#cbe5b8')}${P('1120,340 1150,335 1155,365 1125,370', '#cbe9b5')}${P('870,245 900,255 890,265 872,262', '#c5c2a0')}${P('780,475 800,478 805,500 785,495', W)}
${blobs(60, 380, 190, 240, 380, 9, '#cfe3be')}${blobs(60, 480, 620, 620, 380, 7, '#dedddb')}${blobs(30, 620, 80, 500, 300, 8, '#e3e6cf')}${blobs(14, 780, 630, 100, 60, 9, '#bde8b3')}${blobs(36, 0, 60, 130, 300, 8, '#d4ebc4')}${blobs(20, 0, 250, 130, 120, 7, U)}${blobs(30, 240, 130, 110, 120, 7, '#cadfbe')}${blobs(25, 1080, 200, 170, 240, 8, '#dfe8cc')}
${L('160,50 165,85 190,110 135,215 165,240 150,340 105,440 0,525M195,55 230,110 260,115 330,140 345,190 340,300 335,420 310,475 360,560 420,640 280,772 215,715 130,630M420,640 480,608 560,590 600,572 660,608 720,565 770,548 810,500 795,480 780,505 740,500 720,510 690,465 685,430 640,375 632,320 580,315 580,285 625,285 620,200 560,160 542,120 540,60M540,60 500,78 470,65 460,55M465,145 455,205 510,212 530,235 560,190 605,200 570,210M335,475 385,470 385,530 420,540 440,480', B, 7, 'opacity=".85"')}
${L('0,525 100,445 150,340M0,410 45,450 40,480', '#6fb078', 4, 'opacity=".7"')}
${L('0,555 60,600 130,650 205,715 278,785 345,850 400,910 470,990 510,1038', '#848a7d', 3)}
${L('0,530 60,565 130,625', '#ddd', 5)}
${L('0,210 60,180 160,140M0,260 55,230 95,205M0,355 60,330 135,315M60,180 130,270 137,315M60,230 110,300', R, 2.5)}
${L('545,60 545,130M470,270 545,150 700,80M545,70 620,90 700,80 770,115 830,150 870,150M640,155 700,175 760,210 850,225M870,205 1000,215 1040,215 1060,215M885,365 920,420 960,530 1000,600 1080,645 1165,695M680,560 730,545 820,480 900,475 960,450 1080,425 1110,405 1200,360M720,490 740,560 735,650 790,720 800,770 800,820 785,880 765,960 770,1000M445,680 500,710 545,680 560,610M500,710 490,690M600,680 570,720 560,760 550,900 470,970M560,740 620,750 640,790 655,860 610,890 550,920M700,705 740,715 760,700 790,715M800,770 880,755 980,700 1050,650 1075,600M600,680 660,640 670,620M900,760 905,830 870,880 850,920 800,960M1165,695 1210,640 1240,620M900,440 930,460 1000,570 1090,560 1200,500M550,900 610,980 650,1010', R, 2.8)}
${L('873,39 860,150 875,320 895,440 940,550 1030,650 1110,740 1170,820 1250,870', '#6e6e6e', 4)}
${L('1060,39 1058,170 1035,230 1038,300 1070,390 1130,490 1200,550M1115,39 1160,95 1200,110 1230,70 1250,100', '#777', 3.5)}
${L('0,325 100,220 240,75 270,62 300,62 325,39', '#c98a3f', 7)}${L('0,330 90,232', O, 6)}${L('0,103 60,65 120,42', '#a97a3c', 6)}
${L('415,39 413,65 395,100 388,140 375,150', '#f08a70', 7)}
${L('1010,39 1060,115 1150,220 1230,325 1260,390', '#e5ac57', 6)}${L('1100,165 1100,230 1110,270 1100,340 1110,400 1140,445 1190,480 1230,540 1225,600 1245,650 1240,740 1250,860', O, 5.5)}
${L('1220,370 1225,350 1260,330M1250,390 1260,440', '#f07a60', 6)}
${L('930,905 990,855 1020,810 1060,785 1120,745 1170,695 1210,715 1220,740 1200,785 1230,790 1240,740M915,930 880,965 830,985 835,1038M1260,860 1250,1038', '#b497bd', 4, 'stroke-dasharray="18 6 5 6"')}
${L('945,940 960,970 1000,995 1010,1015 1045,1038', '#f0806a', 7)}
</g>
<g transform="translate(2430 -39)">
${P('260,80 330,60 380,150 420,170 440,250 505,270 450,320 415,370 250,375 200,310 180,290 240,240 225,190 290,170', G)}
${P('330,70 360,80 390,140 350,160 270,120 260,70', G)}${P('380,110 410,130 430,200 470,290 440,310 370,200', G)}
${P('505,90 560,95 575,130 560,150 515,140', G)}${P('535,185 570,165 575,210 545,250', '#cfe8c0')}
${P('610,165 640,150 700,190 715,140 715,80 665,60 655,100 610,130', G)}${P('612,165 640,155 700,195 712,225 614,230', G)}
${P('575,270 615,230 700,235 735,215 790,220 825,270 800,355 730,350 680,400 600,430 540,440 480,500 430,530 400,510 355,470 430,455 490,420 520,370 560,320', G)}
${P('285,440 320,430 350,470 410,510 410,570 350,580 300,590 240,545 260,490', G)}${P('190,400 240,370 290,360 280,420 260,460 200,500 180,450', G, 'opacity=".8"')}
${P('0,300 30,340 70,370 200,350 210,300 180,270 150,200 90,180 120,150 60,130 0,130', G, 'opacity=".6"')}
${P('25,215 70,200 120,220 155,270 155,340 110,348 60,320 20,270 12,245', W)}${P('220,425 255,435 250,500 215,510 195,475', W)}
${P('520,230 575,205 570,240 530,262', '#cef5dc')}${P('15,310 70,355 40,360 10,345', '#c9f4df')}
${P('60,80 140,50 200,60 200,110 150,110 110,160 80,130', U)}${P('230,140 260,145 270,200 300,240 260,240 240,190', U)}${P('1025,370 1060,375 1080,410 1060,420 1030,395', U)}${P('500,560 590,565 585,600 520,600', U)}${P('515,650 545,650 540,700 515,695', U)}${P('225,605 245,600 270,640 230,640', U)}${P('930,610 965,605 950,635 935,632', U)}${P('340,770 370,765 375,800 345,800', U)}${P('30,370 55,410 25,415 0,380', U)}${P('150,500 190,490 220,550 160,540', U)}${P('1030,715 1060,710 1040,735', U)}${P('810,670 818,670 818,705 810,705', '#bfc0d0')}${P('0,830 40,840 35,870 0,880', U)}${P('800,70 820,80 830,115 810,110', U)}
${P('1085,330 1135,335 1145,400 1130,450 1170,490 1180,560 1206,590 1206,665 1150,660 1100,630 1060,600 1150,600 1120,540 1095,480 1120,450 1090,390', G)}
${P('1005,745 1040,735 1080,760 1090,810 1060,840 1020,800', '#c6ebb7')}${P('1080,690 1140,670 1206,680 1206,800 1170,760 1140,700', G, 'opacity=".8"')}${P('1030,900 1070,870 1100,930 1170,930 1190,900 1206,940 1160,965 1040,940', '#c6ebb7')}${P('800,550 860,550 865,560 850,640 790,640', '#cfe8c5')}${P('800,560 850,560 845,625 800,630', '#f1eee8')}${P('825,585 840,583 835,608 820,603', W)}
${P('80,590 150,560 220,620 210,660 130,690 80,650', '#eff1d3')}${P('230,920 290,905 300,960 240,940', '#eff0d5')}${P('600,90 660,50 665,90 640,120', '#dbeccb')}
${blobs(50, 1005, 740, 160, 200, 12, '#bfe6b0')}${blobs(34, 840, 60, 340, 240, 8, '#eceadb')}${blobs(30, 700, 640, 330, 380, 7, '#e6ebdc')}${blobs(30, 180, 180, 120, 160, 6, '#cae3bf')}${blobs(30, 480, 60, 160, 120, 8, '#c6e2b8')}${blobs(20, 1010, 310, 90, 60, 10, '#cfeac0')}${blobs(24, 0, 120, 140, 70, 8, '#d1e8c4')}${blobs(20, 0, 540, 140, 150, 8, '#e6ebcf')}${blobs(14, 690, 430, 90, 110, 8, '#d0e6c0')}
${L('210,45 220,90 210,130 215,200 180,270 210,310M0,130 90,140 95,175 145,170 135,150M655,60 650,110 610,135 615,232 700,230M740,215 790,220 825,255 825,300 790,352 740,345 690,395 640,400 590,430 540,440 485,500 480,525 430,525 420,560 385,575 375,660 310,660M310,675 250,690 190,705 170,670 215,650 225,635 220,545M0,250 10,290 70,350 110,360M180,470 185,430 210,380 250,370M45,545 100,500 130,500M790,640 800,560 850,548 870,560 855,655 800,640', B, 7, 'opacity=".8"')}
${L('0,200 50,185 90,200 180,290 230,320 340,440 400,460 420,440 500,370 570,320 580,160M340,60 440,90 510,150 620,165 700,205 760,220 850,245 865,290M510,150 500,90 490,39M180,290 200,270M760,440 840,310 905,260 930,275 1050,275 1090,290M750,530 690,570 500,575M870,350 900,370 1000,325 960,380 945,480 960,600 930,615M760,350 720,420 640,500 560,570 400,600 385,660M865,550 950,620 1040,645 1100,660 1130,690M940,620 940,680 1000,750M1110,315 1206,315M400,640 520,620 600,615 700,610 800,440M670,620 670,670 600,705 525,705M520,600 480,560 460,530M325,660 325,720 385,830 350,880 290,920 270,975M325,710 300,760 275,820 285,910M190,700 195,960 120,960 60,860 160,710M515,715 495,800 490,900 475,1038M510,750 530,830 525,960 515,1038M560,620 600,690 620,760 640,800 635,880M600,700 670,770 730,910M1140,810 1070,865 1030,920 930,990 850,1038M1045,870 980,950M0,480 50,520 160,540 215,560M400,600 450,580M240,545 290,520 290,440M140,700 190,690 220,750M270,975 330,990 460,1038', R, 2.8)}
${L('0,590 60,640 120,670 210,680 350,680 400,695 460,660 520,660 545,640', '#777', 3.5)}${L('0,865 40,880 130,885 200,910 470,1038M10,1038 20,870', '#6c6c6c', 4)}
${L('760,39 850,105 930,150 1000,172M1150,215 1206,228', '#999', 3.5)}${L('840,39 900,50 980,80 1060,90 1206,150', '#777', 3.5)}
${L('805,39 880,95 985,125M1160,180 1206,195', '#e5486f', 7)}${L('930,39 980,60 1000,80', O, 5)}
${L('220,545 230,585 265,602 330,575 350,585 380,572 400,602 470,590 510,572 540,580 560,610 545,650 550,690 525,700 560,790 590,900 610,960 640,1010 670,1038', '#fbbc6a', 6)}
${L('0,325 20,370 40,390 110,420 150,450 160,500M0,590 10,640 20,720 25,800 35,840 25,940 25,1038', '#f5b465', 6)}
${L('0,350 15,390 20,420 35,435', '#f07a60', 6)}
${L('775,520 840,460 890,470 895,520 920,520 955,525 960,495 1080,480 1130,485 1206,470M775,510 830,550 855,570 830,640 838,725 795,735 790,790 770,800 740,770 705,810 725,870 665,880 665,970 595,965 590,990 550,990 548,1038', '#b99fc2', 4, 'stroke-dasharray="18 6 5 6"')}
${L('757,39V1038', '#d9d9df', 3)}
${peak('257,56 301,56 583,76 351,124 532,124 310,172 626,195 52,188 253,254 335,243 414,260 351,279 445,299 374,339 408,336 408,384 408,424 285,396 343,443 380,489 433,474 473,443 521,409 586,325 600,356 810,220 844,355 869,378 818,434 785,460 787,483 821,471 857,457 897,463 713,466 707,531 736,520 772,512 1109,339 1083,384 1047,412 1061,449 1115,452 1179,438 149,576 239,601 290,562 278,652 1064,706 1067,768 1185,850')}
</g>
${L('0,106H640M640,106H3636', '#d3d3da', 3.5)}${L('1015,0V999', '#d5d3d8', 3)}
<g stroke="#fff" stroke-opacity=".75" stroke-width="5" paint-order="stroke" stroke-linejoin="round">
${T(722, 138, 'Fiumicino', 140)}${T(907, 332, 'Lido di Ostia', 180)}
${T(1266, 53, 'Acilia', 74)}
<g ${IT}>${[['Riserva', 1421, 321, 106], ['Naturale', 1421, 361, 130], ['Statale', 1421, 401, 104], ['Tenuta', 1421, 442, 98], ['di Castelporziano', 1421, 483, 262], ['Riserva', 1687, 247, 106], ['Naturale', 1687, 287, 130], ['di Decima', 1687, 328, 148], ['Malafede', 1687, 368, 138]].map(([t, x, y, w]) => T(x, y, t, w, '#208020', 32)).join('')}
${T(2196, 1, 'Aeroporto', 110, '#7055b0', 29)}${T(2196, 33, 'di Roma-', 112, '#7055b0', 29)}${T(2196, 67, 'Ciampino', 120, '#7055b0', 29)}</g>
${T(1840, 691, 'Pomezia', 122)}${T(1900, 1012, 'Ardea', 80)}
${T(2506, 21, 'Grottaferrata', 190)}${T(2473, 128, 'Marino', 104)}${T(2682, 178, 'Rocca di Papa', 200)}${T(2898, 7, 'Rocca Priora', 180)}
${T(2472, 353, 'Albano Laziale', 210)}${T(2525, 398, 'Ariccia', 94)}${T(2606, 455, 'Genzano di', 164)}${T(2606, 494, 'Roma', 82)}${T(2434, 536, 'Cecchina', 132)}
${T(2960, 585, 'Velletri', 100)}${T(2631, 653, 'Lanuvio', 114)}${T(3184, 374, 'Lariano', 112)}${T(3518, 281, 'Artena', 96)}${T(3533, 827, 'Cori', 58)}${T(3545, 74, 'Valmontone', 166)}
</g>
<polyline points="1573,122 1569,173 1554,205 1563,232 1542,265 1542,315 1548,336 1613,391 1646,454 1681,481 1697,508 1757,553 1785,580 1812,622 1912,715 1952,780 2106,873" fill="none" stroke="#f00" stroke-width="11.5" stroke-linejoin="round" stroke-linecap="round"/>
<rect x="1019" y="116" width="76" height="48" rx="5" fill="#f3dfc8" stroke="#c9a37c" stroke-width="3"/>${T(1057, 150, 'SP8', 50, '#4d3a20', 28)}
<rect x="2066" y="868" width="110" height="48" rx="5" fill="#f3d3cb" stroke="#cf948a" stroke-width="3"/>${T(2121, 904, 'SR148', 82, '#6b2b20', 28)}
<rect x="2983" y="839" width="78" height="48" rx="5" fill="#f3dfc8" stroke="#c9a37c" stroke-width="3"/>${T(3022, 873, 'SS7', 48, '#4d3a20', 28)}
</svg>
<div class="zoom"><div><svg width="17" height="18"><path d="M8.5 1.500v16M.5 9.500h16" stroke="#000" stroke-width="3"/></svg></div><div><svg width="17" height="18"><path d="M.5 9.500h16" stroke="#000" stroke-width="3"/></svg></div></div>
<div class="layers"><svg width="36" height="35" viewBox="0 0 36 35"><path d="m0 23 18-11 18 11-18 11z" fill="#8f8f8f"/><path d="m0 20 18-11 18 11-18 11z" fill="#b5b5b5" stroke="#fff" stroke-width=".7"/><path d="m0 17.5 18-11 18 11L18 28z" fill="#777"/><path d="m0 16 18-11 18 11L18 26.5z" fill="#bbb"/><path d="m0 13.5 18-11 18 11L18 24z" fill="#6f6f6f"/><path d="m0 11.5 18-11 18 11L18 22z" fill="#eee"/><path d="m5 11.5 13-6 13 6-13 8z" fill="#d8d8d8"/></svg></div>
<div class="attr"><fit-text w="174"><a>Leaflet</a> | © <a>OpenStreetMap</a></fit-text></div>`);

define('grafana-app', `<style>:host{display:flex;flex:1;min-height:0;background:#0b0c0e;font-family:Roboto,sans-serif;-webkit-text-stroke:.25px;overflow:hidden}
main{flex:1;display:flex;flex-direction:column}
.g{display:grid;grid-template-columns:1236px 1236px;grid-template-rows:394px 446px;gap:11px;margin-left:21px}</style>
<side-menu></side-menu><main><dash-toolbar></dash-toolbar><div class="g">
<dash-panel heading="Lat/Lon" tw="65"><data-table></data-table></dash-panel>
<dash-panel heading="Geo positioning" tw="133"><geo-map></geo-map></dash-panel>
<dash-panel heading="Temperature/Humidity" tw="190"><time-chart></time-chart></dash-panel></div></main>`);

/* Text whose letter spacing adapts so that the run takes exactly the width given. */
define('fit-text', `<style>:host{display:block;white-space:nowrap;flex:none}span{display:inline-block}</style><span><slot></slot></span>`, el => {
  const w = +el.getAttribute('w'), s = el.shadowRoot.querySelector('span'), n = el.textContent.length;
  el.style.width = w + 'px';
  s.style.letterSpacing = ((w - s.getBoundingClientRect().width) / n).toFixed(3) + 'px';
});
</script>
</body>
</html>
